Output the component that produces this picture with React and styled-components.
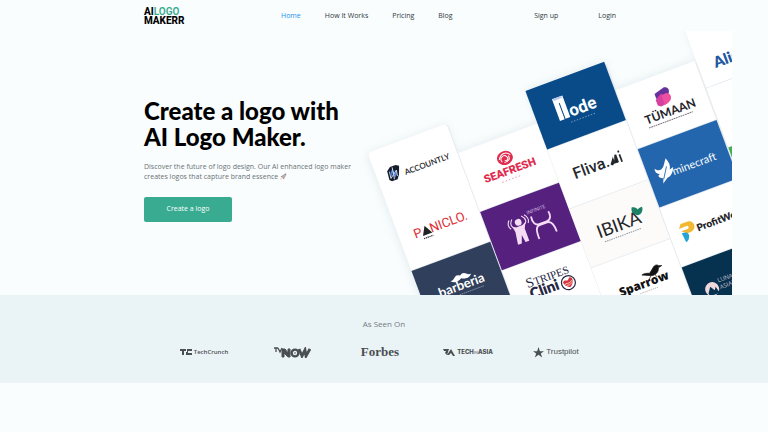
import React from 'react';
import styled, { createGlobalStyle } from 'styled-components';

const GlobalStyle = createGlobalStyle`
  * {
    box-sizing: border-box;
  }

  body {
    margin: 0;
    background: #f9fdfe;
    color: #000;
    font-family: 'Open Sans', 'Noto Sans', sans-serif;
  }
`;

const Header = styled.header`
  display: flex;
  align-items: center;
  height: 31px;
  padding: 0 152px 0 144px;
`;

const LogoLink = styled.a`
  flex: 0 0 137px;
  display: block;
  color: #000;
  font: 800 10px/9px 'Roboto', sans-serif;
  text-decoration: none;
`;

const LogoRow = styled.span`
  display: block;
`;

const LogoAccent = styled.span`
  color: #36ab8f;
  font-weight: 600;
`;

const Nav = styled.nav`
  display: flex;
  flex: 1;
  gap: 24px;
`;

const Account = styled.div`
  display: flex;
  gap: 40px;
`;

const NavLink = styled.a`
  color: ${(props) => (props.$active ? '#2492eb' : '#30383c')};
  font-size: 7px;
  font-weight: 500;
  line-height: 10px;
  text-decoration: none;
  white-space: nowrap;
`;

const Hero = styled.section`
  display: flex;
  align-items: flex-start;
  padding: 0 36px 0 144px;
`;

const Copy = styled.div`
  flex: 0 0 216px;
  padding-top: 67px;
`;

const Title = styled.h1`
  margin: 0;
  font: 900 24px/26px 'Lato', sans-serif;
  white-space: nowrap;
`;

const Lead = styled.p`
  margin: 12px 0;
  color: #6b7275;
  font-size: 7px;
  line-height: 10px;
  white-space: nowrap;
`;

const RocketIcon = styled.svg`
  width: 7px;
  height: 7px;
  vertical-align: -1px;
`;

const CtaButton = styled.button`
  width: 88px;
  height: 25px;
  padding: 0;
  border: 0;
  border-radius: 2px;
  background: #38ab91;
  color: #fff;
  font: 500 7px/10px 'Open Sans', sans-serif;
  cursor: pointer;
`;

const Showcase = styled.svg`
  display: block;
  flex: 1;
  min-width: 0;
`;

const Press = styled.section`
  padding: 24px 144px 23px;
  background: #eaf3f6;
`;

const PressTitle = styled.h2`
  margin: 0;
  color: #747c80;
  font-size: 8px;
  font-weight: 400;
  line-height: 10px;
  text-align: center;
`;

const PressList = styled.ul`
  display: grid;
  grid-template-columns: repeat(5, 1fr);
  align-items: center;
  margin: 15px 0 0;
  padding: 0 24px 0 16px;
  list-style: none;
`;

const PressItem = styled.li`
  display: flex;
  align-items: center;
  justify-content: center;
  gap: 2px;
  height: 16px;
  color: #4a4f51;
  font-family: ${(props) => props.$font || "'Open Sans'"}, sans-serif;
  font-size: ${(props) => props.$size}px;
  font-weight: ${(props) => props.$weight || 400};
  line-height: 16px;
  white-space: nowrap;
`;

const Faint = styled.span`
  color: #9ba3a6;
  font-size: 4px;
`;

const Tile = ({ x, y, fill = '#fff', children }) => (
  <g transform={`translate(${x} ${y})`}>
    <rect width="84" height="62.2" fill={fill} />
    {children}
  </g>
);

const Word = ({ x, y, size, fill, weight = 400, font = 'Open Sans', children }) => (
  <text x={x} y={y} fontSize={size} fill={fill} fontWeight={weight} fontFamily={`'${font}', sans-serif`}>
    {children}
  </text>
);

const columns = [0, 85, 169.5, 254.5, 340];

const LogoShowcase = () => (
  <Showcase viewBox="360 31 372 264" role="img" aria-label="Logo examples">
    <defs>
      <filter id="shade" x="-10%" y="-10%" width="120%" height="120%">
        <feGaussianBlur stdDeviation="4" />
      </filter>
    </defs>
    <g transform="translate(367.6 153) rotate(-20.4)">
      <g fill="#9fb4bd" opacity="0.2" filter="url(#shade)">
        <rect x="-2" y="0" width="86" height="200" />
        <rect x="85" y="30" width="84" height="200" />
        <rect x="170" y="-4" width="84" height="240" />
        <rect x="255" y="26" width="84" height="240" />
        <rect x="341" y="-6" width="90" height="240" />
      </g>
      <g fill="#e6ebee">
        <rect x="0" y="2" width="85" height="220" />
        <rect x="84" y="33" width="86" height="220" />
        <rect x="169" y="0" width="86" height="260" />
        <rect x="254" y="30" width="87" height="260" />
        <rect x="340" y="0" width="87" height="260" />
      </g>

      <rect width="84" height="20" rx="4" fill="#fff" />
      <g>
        <Tile x={columns[0]} y={3}>
          <g transform="translate(0 -3)">
            <path d="m12 24 4-3h6l3 2-3 8-3 4h-6l-2-2Z" fill="#151c2c" />
            <path d="m14 31 1-5 3-3v6l3-3-1 4-3 3v-6Z" fill="#4f82db" />
            <path d="m14 25-1 7 4-3-1 5m2-12-1 7 4-3-1 6" fill="none" stroke="#dce8fb" strokeWidth="0.8" />
            <Word x={28} y={34} size={8} fill="#202124" weight={600} font="Lato">ACCOUNTLY</Word>
          </g>
        </Tile>
        <Tile x={columns[0]} y={63}>
          <Word x={15} y={34} size={13} fill="#dd3034" font="Roboto">P</Word>
          <path d="m23 34 5-9 5 9Z" fill="#202426" />
          <path d="M23 37h10" stroke="#303538" strokeWidth="1.2" strokeDasharray="1.3 0.6" />
          <Word x={32} y={34} size={13} fill="#dd3034" font="Roboto">NICLO.</Word>
        </Tile>
        <Tile x={columns[0]} y={126} fill="#30405c">
          <path d="M33 23c4 1 5-4 9-3l2 1 2-1c4-1 5 4 9 3-3 4-8 3-11 1-3 2-8 3-11-1Z" fill="#fff" />
          <Word x={18} y={35} size={13} fill="#fff" weight={700} font="Lato">barberia</Word>
          <path d="M37 39h26" stroke="#a4adba" strokeWidth="0.7" strokeDasharray="1.5 0.7" />
        </Tile>
      </g>

      <g>
        <Tile x={columns[1]} y={31.5}>
          <ellipse cx="42" cy="21" rx="8" ry="7" fill="#e12b4d" />
          <path d="M36 21c3-6 10-6 12-1m-10 4c-2-5 4-7 6-4s-1 5-3 3m-1 2c5 1 7-2 6-5" fill="none" stroke="#fff" strokeWidth="1" />
          <Word x={15} y={38} size={11} fill="#e12b4d" weight={900} font="Roboto">SEAFRESH</Word>
          <path d="M31 43h20" stroke="#e68b9b" strokeWidth="0.8" strokeDasharray="1.5 2" />
        </Tile>
        <Tile x={columns[1]} y={94.5} fill="#56207f">
          <g fill="#f4dcf4">
            <circle cx="32" cy="23" r="3.4" />
            <path d="m25 26 4 1h6l4-2-3 6v13h-4l-1-8-3 8h-4l2-13Z" />
          </g>
          <path d="M27 18c-4 4-3 8 0 9m10-9c4 4 3 8 0 9m-13-9c-3 3-3 7-1 9m17-9c3 3 3 7 1 9" fill="none" stroke="#f4dcf4" strokeWidth="1.1" />
          <path d="M46 22c-1 6 1 10 5 10h8c5 0 6-5 5-9M46 46c0-9 1-13 5-13h8c4 0 6 5 6 12" fill="none" stroke="#f4dcf4" strokeWidth="1.8" />
          <Word x={43} y={19} size={5} fill="#dac3e3">INFINITE</Word>
        </Tile>
        <Tile x={columns[1]} y={157.5}>
          <Word x={18} y={25} size={14} fill="#252542" font="Liberation Serif">S</Word>
          <Word x={26} y={25} size={11} fill="#252542" font="Liberation Serif">TRIPES</Word>
          <Word x={18} y={37} size={15} fill="#252542" weight={800} font="Lato">Clini</Word>
          <circle cx="58" cy="34" r="7" fill="#fff" stroke="#252542" strokeWidth="1.2" />
          <path d="M53 32c3-3 4 1 6-1 2-3 4-1 4 1-1 5-3 6-5 7-3-2-5-4-5-7Z" fill="#d8323b" />
          <path d="M53 35c3-2 5 1 9-2m-8 4c3-2 4 1 7-2" fill="none" stroke="#fff" strokeWidth="0.7" />
        </Tile>
      </g>

      <g>
        <Tile x={columns[2]} y={-3} fill="#084b88">
          <path d="M22 17h11v23h-5V23h-1v17h-5Z" fill="#fff" />
          <path d="M23 18h9" stroke="#b9c5eb" strokeWidth="2" />
          <Word x={34} y={40} size={17} fill="#fff" weight={700} font="Roboto">ode</Word>
          <path d="M32 45h27" stroke="#86a9cb" strokeWidth="0.8" strokeDasharray="1.5 1.5" />
        </Tile>
        <Tile x={columns[2]} y={60}>
          <Word x={16} y={37} size={16} fill="#24282b" weight={500} font="Roboto">Fliva..</Word>
          <path d="m55 36 3-4v4m1 0 3-8v8" stroke="#24282b" strokeWidth="2" />
          <path d="M66 37V29m0-4v2" stroke="#24282b" strokeWidth="1.7" />
        </Tile>
        <Tile x={columns[2]} y={123} fill="#fcfbf9">
          <Word x={18} y={38} size={18} fill="#24252a" font="Lato">IBIKA</Word>
          <path d="M59 27c-2-3-1-5 0-7 3 1 4 2 5 4 2-1 4-1 5-1 0 5-5 8-8 6Z" fill="#1c8066" />
          <path d="M22 43h39" stroke="#8f9aaa" strokeWidth="1" strokeDasharray="1.5 0.8" />
        </Tile>
        <Tile x={columns[2]} y={186}>
          <Word x={18} y={37} size={12} fill="#111" weight={800}>Sparrow</Word>
          <path d="M45 24c3-1 5 0 8 1l5-4c2-2 5-2 6 0l3 1-4 1c-1 4-5 6-9 5l-9-4Zm8 4-3 3m8-3v3" fill="#111" stroke="#111" strokeWidth="0.6" />
          <path d="M37 41h19" stroke="#aaa" strokeWidth="0.7" strokeDasharray="1.5 0.7" />
        </Tile>
      </g>

      <g>
        <Tile x={columns[3]} y={27.7}>
          <path d="m35 17 11-3c4 1 5 4 2 8l-8 2-5-2Z" fill="#66319a" />
          <path d="m34 23 7-4 4 3v8l-8 1-3-2Z" fill="#d5419f" />
          <path d="m41 21 5-1c4 1 5 6 1 9l-6 2Z" fill="#ef4fa0" />
          <Word x={17} y={43} size={12} fill="#252329" weight={700} font="Lato">TÜMAAN</Word>
          <path d="M18 47h47" stroke="#77737d" strokeWidth="1" strokeDasharray="1.8 0.6" />
        </Tile>
        <Tile x={columns[3]} y={90.7} fill="#2366ad">
          <path d="M9 24c3 4 6 4 9 1l5-7c2 5 2 9 0 12l4-1c-2 5-5 8-9 8l-6 4 2-5c-3-1-4-2-4-4l2-1c-3-2-4-4-3-7Z" fill="#fff" />
          <path d="m14 37 7-11" stroke="#2366ad" strokeWidth="0.8" />
          <Word x={25} y={37} size={11} fill="#fff" font="Lato">minecraft</Word>
        </Tile>
        <Tile x={columns[3]} y={153.7}>
          <path d="M14 22h7c7 0 8 10 0 11h-4l-5-4h7c2 0 2-3 0-3h-8Z" fill="#f2b733" />
          <path d="M12 31c5 0 7 2 6 5s-3 5-5 5Z" fill="#25a5d5" />
          <Word x={28} y={35} size={10} fill="#242628" weight={800} font="Lato">ProfitWell</Word>
        </Tile>
        <Tile x={columns[3]} y={216.7} fill="#06314f">
          <circle cx="21" cy="31" r="7" fill="#efd8dc" />
          <path d="m16 34 4-6 3 5 2-3 2 7H17Z" fill="#06314f" />
          <Word x={29} y={27} size={6} fill="#dac8d2">LUNA</Word>
          <Word x={29} y={34} size={6} fill="#dac8d2">ASIAN</Word>
        </Tile>
      </g>

      <g>
        <Tile x={columns[4]} y={-5.4}>
          <Word x={16} y={47} size={15} fill="#2257a2" weight={800} font="Lato">Align</Word>
        </Tile>
        <Tile x={columns[4]} y={57.6} />
        <Tile x={columns[4]} y={120.6} fill="#42af55" />
      </g>
    </g>
  </Showcase>
);

const Rocket = () => (
  <RocketIcon viewBox="0 0 14 14" aria-hidden="true">
    <path d="M13 1C8 1 5 4 3 8l3 3c4-2 7-5 7-10Z" fill="#aab1b7" />
    <path d="m5 5-4 2 3 1Zm4 4-1 4-2-3ZM10 2l2 2V1Z" fill="#d4616b" />
    <path d="m2 10-1 3 3-1Z" fill="#e8a34e" />
  </RocketIcon>
);

const App = () => (
  <>
    <GlobalStyle />
    <Header>
      <LogoLink href="#">
        <LogoRow>AI<LogoAccent>LOGO</LogoAccent></LogoRow>
        <LogoRow>MAKERR</LogoRow>
      </LogoLink>
      <Nav>
        <NavLink href="#" $active>Home</NavLink>
        <NavLink href="#">How It Works</NavLink>
        <NavLink href="#">Pricing</NavLink>
        <NavLink href="#">Blog</NavLink>
      </Nav>
      <Account>
        <NavLink href="#">Sign up</NavLink>
        <NavLink href="#">Login</NavLink>
      </Account>
    </Header>
    <main>
      <Hero>
        <Copy>
          <Title>Create a logo with<br />AI Logo Maker.</Title>
          <Lead>
            Discover the future of logo design. Our AI enhanced logo maker<br />
            creates logos that capture brand essence <Rocket />
          </Lead>
          <CtaButton type="button">Create a logo</CtaButton>
        </Copy>
        <LogoShowcase />
      </Hero>
      <Press>
        <PressTitle>As Seen On</PressTitle>
        <PressList>
          <PressItem $size={6} $weight={600}>
            <svg width="12" height="6" viewBox="0 0 12 6" aria-hidden="true">
              <path d="M0 0h6v2H4v4H2V2H0Zm7 0h5v2H8v2h4v2H6V3h1Z" fill="currentColor" />
            </svg>
            TechCrunch
          </PressItem>
          <PressItem $size={12}>
            <svg width="37" height="11" viewBox="0 0 37 11" role="img" aria-label="TV NOW">
              <path d="M0 1h4M2 1v4M4 1l2 4 2-4" fill="none" stroke="currentColor" strokeWidth="1.3" />
              <path d="M8 10V2h3l3 4V2h2v8h-2l-4-4v4Z" fill="currentColor" stroke="currentColor" />
              <path d="m25 2 3 7 3-6 1 6 4-7" fill="none" stroke="currentColor" strokeWidth="2.8" />
              <circle cx="21" cy="6" r="3.4" fill="none" stroke="currentColor" strokeWidth="2.4" />
              <circle cx="21" cy="6" r="0.8" fill="currentColor" />
            </svg>
          </PressItem>
          <PressItem $size={13} $weight={700} $font="'Liberation Serif'">Forbes</PressItem>
          <PressItem $size={6} $weight={800} $font="'Inter'">
            <svg width="12" height="7" viewBox="0 0 12 7" aria-hidden="true">
              <path d="M0 0h6L4 6 2 4l1-2H1Zm8 0 4 7h-2L8 4 6 6H4Z" fill="currentColor" />
            </svg>
            <span>TECH<Faint>IN</Faint>ASIA</span>
          </PressItem>
          <PressItem $size={8} $font="'Liberation Sans'">
            <svg width="11" height="11" viewBox="0 0 24 24" aria-hidden="true">
              <path d="m12 0 3 9h9l-7 5 3 9-8-6-8 6 3-9-7-5h9Z" fill="currentColor" />
            </svg>
            Trustpilot
          </PressItem>
        </PressList>
      </Press>
    </main>
  </>
);

export default App;
